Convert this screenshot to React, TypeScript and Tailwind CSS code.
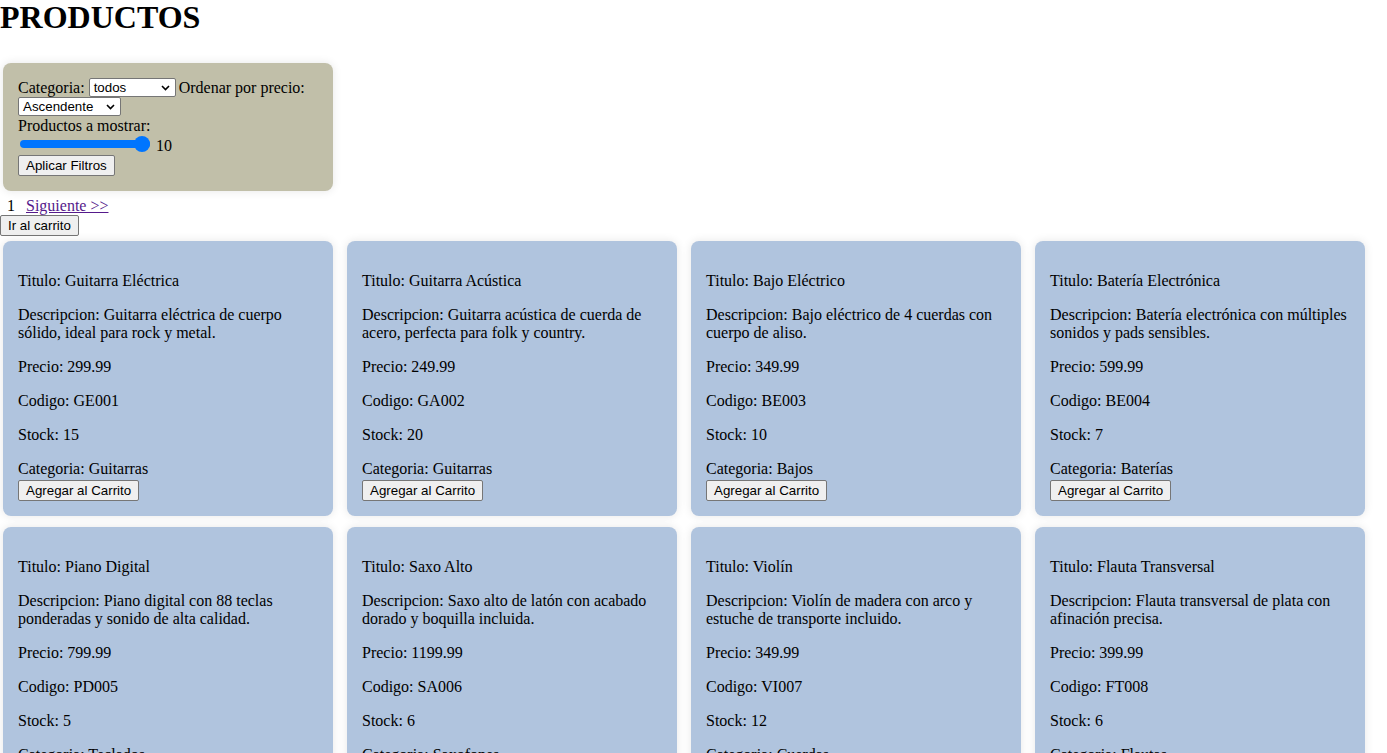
import React from "react";

type Producto = {
  titulo: string;
  descripcion: string;
  precio: string;
  codigo: string;
  stock: number;
  categoria: string;
};

const productos: Producto[] = [
  { titulo: "Guitarra Eléctrica", descripcion: "Guitarra eléctrica de cuerpo sólido, ideal para rock y metal.", precio: "299.99", codigo: "GE001", stock: 15, categoria: "Guitarras" },
  { titulo: "Guitarra Acústica", descripcion: "Guitarra acústica de cuerda de acero, perfecta para folk y country.", precio: "249.99", codigo: "GA002", stock: 20, categoria: "Guitarras" },
  { titulo: "Bajo Eléctrico", descripcion: "Bajo eléctrico de 4 cuerdas con cuerpo de aliso.", precio: "349.99", codigo: "BE003", stock: 10, categoria: "Bajos" },
  { titulo: "Batería Electrónica", descripcion: "Batería electrónica con múltiples sonidos y pads sensibles.", precio: "599.99", codigo: "BE004", stock: 7, categoria: "Baterías" },
  { titulo: "Piano Digital", descripcion: "Piano digital con 88 teclas ponderadas y sonido de alta calidad.", precio: "799.99", codigo: "PD005", stock: 5, categoria: "Teclados" },
  { titulo: "Saxo Alto", descripcion: "Saxo alto de latón con acabado dorado y boquilla incluida.", precio: "1199.99", codigo: "SA006", stock: 6, categoria: "Saxofones" },
  { titulo: "Violín", descripcion: "Violín de madera con arco y estuche de transporte incluido.", precio: "349.99", codigo: "VI007", stock: 12, categoria: "Cuerdas" },
  { titulo: "Flauta Transversal", descripcion: "Flauta transversal de plata con afinación precisa.", precio: "399.99", codigo: "FT008", stock: 6, categoria: "Flautas" },
];

const btn =
  "inline-flex items-center h-[21px] px-[7px] bg-[#efefef] border border-[#767676] rounded-[2px] text-[13.33px] leading-[15px] font-['Liberation_Sans',Arial,sans-serif] text-black";

function FakeSelect({ value, width }: { value: string; width: string }) {
  return (
    <div
      className={`${width} h-[19px] flex items-center justify-between pl-[4px] pr-[5px] bg-white border border-[#767676] rounded-[2px] text-[13.33px] leading-[15px] font-['Liberation_Sans',Arial,sans-serif]`}
    >
      <span>{value}</span>
      <svg width="9" height="6" viewBox="0 0 9 6" fill="none">
        <path d="M1 1l3.5 3.5L8 1" stroke="#000" strokeWidth="1.6" />
      </svg>
    </div>
  );
}

function Card({ p }: { p: Producto }) {
  return (
    <div className="w-[330px] p-[15px] rounded-[8px] bg-[#b0c4de] shadow-[0_0_10px_rgba(0,0,0,0.1)]">
      <p className="my-[16px]">Titulo: {p.titulo}</p>
      <p className="my-[16px]">Descripcion: {p.descripcion}</p>
      <p className="my-[16px]">Precio: {p.precio}</p>
      <p className="my-[16px]">Codigo: {p.codigo}</p>
      <p className="my-[16px]">Stock: {p.stock}</p>
      <div>Categoria: {p.categoria}</div>
      <div className="mt-[2px] flex">
        <button className={btn}>Agregar al Carrito</button>
      </div>
    </div>
  );
}

export default function App() {
  return (
    <div className="min-h-screen bg-white text-black text-[16px] leading-[normal] font-['Liberation_Serif','Times_New_Roman',serif]">
      <h1 className="text-[32px] font-bold leading-[35px]">PRODUCTOS</h1>

      <div className="mt-[28px] ml-[3px] w-[330px] p-[15px] rounded-[8px] bg-[#c1bfa9] shadow-[0_0_10px_rgba(0,0,0,0.1)]">
        <div className="flex items-center h-[19px] whitespace-nowrap">
          <span>Categoria:</span>
          <span className="ml-[4px]">
            <FakeSelect value="todos" width="w-[87px]" />
          </span>
          <span className="ml-[3px]">Ordenar por precio:</span>
        </div>
        <div className="flex h-[19px]">
          <FakeSelect value="Ascendente" width="w-[103px]" />
        </div>
        <div className="mt-[1px] h-[18px] leading-[18px]">Productos a mostrar:</div>
        <div className="flex items-center h-[18px]">
          <div className="ml-[2px] w-[130px] h-[16px] flex items-center">
            <div className="flex-1 h-[8px] rounded-full bg-[#0075ff]" />
            <div className="-ml-[16px] w-[16px] h-[16px] rounded-full bg-[#0075ff]" />
          </div>
          <span className="ml-[6px] mt-[3px]">10</span>
        </div>
        <div className="mt-[2px] flex">
          <button className={btn}>Aplicar Filtros</button>
        </div>
      </div>

      <div className="mt-[5px] h-[19px] flex items-center">
        <span className="ml-[7px]">1</span>
        <a href="#" className="ml-[11px] text-[#551a8b] underline">
          Siguiente &gt;&gt;
        </a>
      </div>
      <div className="flex">
        <button className={btn}>Ir al carrito</button>
      </div>

      <div className="mt-[5px] pl-[3px] flex flex-wrap gap-x-[14px] gap-y-[11px] w-[1387px]">
        {productos.map((p) => (
          <Card key={p.codigo} p={p} />
        ))}
      </div>
    </div>
  );
}
